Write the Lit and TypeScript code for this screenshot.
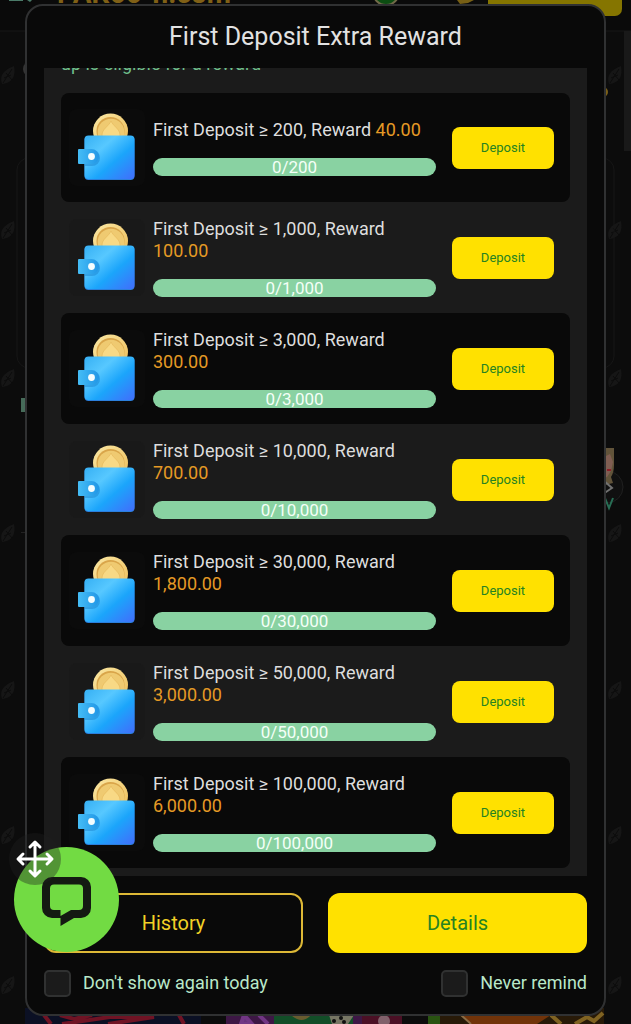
import { LitElement, html, css, svg } from "lit";
import { customElement, property } from "lit/decorators.js";

interface Tier {
  target: string;
  reward: string;
}

const TIERS: Tier[] = [
  { target: "200", reward: "40.00" },
  { target: "1,000", reward: "100.00" },
  { target: "3,000", reward: "300.00" },
  { target: "10,000", reward: "700.00" },
  { target: "30,000", reward: "1,800.00" },
  { target: "50,000", reward: "3,000.00" },
  { target: "100,000", reward: "6,000.00" },
];

@customElement("wallet-icon")
class WalletIcon extends LitElement {
  static styles = css`
    :host { display: block; width: 76px; height: 77px; border-radius: 8px; background: rgba(20, 20, 20, 0.2); }
    svg { display: block; }
  `;
  render() {
    return html`<svg width="76" height="77" viewBox="0 0 76 77" aria-hidden="true">
      <defs>
        <linearGradient id="body" x1="0" y1="0" x2="1" y2="1">
          <stop offset="0" stop-color="#36b0f4" />
          <stop offset="0.32" stop-color="#57c8ff" />
          <stop offset="0.6" stop-color="#1ba5fb" />
          <stop offset="1" stop-color="#426dfb" />
        </linearGradient>
        <linearGradient id="clasp" x1="0" y1="0" x2="1" y2="0">
          <stop offset="0" stop-color="#45bdf6" />
          <stop offset="1" stop-color="#2196e6" />
        </linearGradient>
        <linearGradient id="coin" x1="0" y1="0" x2="1" y2="1">
          <stop offset="0" stop-color="#fbe9a6" />
          <stop offset="1" stop-color="#ecbb55" />
        </linearGradient>
      </defs>
      <circle cx="41.500" cy="22" r="17.500" fill="url(#coin)" />
      <circle cx="41.500" cy="22" r="14" fill="#d9a54a" />
      <circle cx="42" cy="23" r="13.300" fill="#efca71" />
      <path d="M42 12c2 5 9 8 9 14 0 5-5 6-8 3l1 6h-5l2-6c-3 3-8 2-8-3 0-6 7-9 9-14z" fill="#f8d985" stroke="#e6ba5e" stroke-width=".7" />
      <rect x="15.500" y="27" width="50" height="44" rx="4" fill="#2b7fdc" />
      <rect x="15.500" y="26.500" width="50" height="43.500" rx="4" fill="url(#body)" />
      <path d="M15.500 41h7.500a7.500 7.500 0 0 1 0 16H15.500z" fill="#1275c4" opacity=".4" />
      <path d="M10 40H22.500a7.500 7.500 0 0 1 0 15H10a1 1 0 0 1-1-1V41a1 1 0 0 1 1-1z" fill="url(#clasp)" />
      <circle cx="22.500" cy="47.500" r="3.400" fill="#f4fdff" />
    </svg>`;
  }
}

@customElement("tier-row")
class TierRow extends LitElement {
  @property() target = "";
  @property() reward = "";

  static styles = css`
    :host { display: flex; align-items: center; gap: 8px; padding: 16px 16px 16px 8px; border-radius: 8px; }
    :host(:nth-of-type(odd)) { background: #090909; }
    .info { flex: 1; min-width: 0; display: grid; gap: 17px; margin-right: 8px; }
    .label { margin: 0; font-size: 18px; line-height: 22px; color: #dedede; }
    .reward { color: #e59a25; }
    .bar { height: 18px; border-radius: 9px; background: #89d2a2; color: #f4fff7; font-size: 17px; line-height: 18px; text-align: center; }
    .deposit { width: 102px; height: 42px; padding: 0; border: 0; border-radius: 8px; background: #ffe100; color: #268222; font: 13px/20px Roboto, sans-serif; }
  `;
  render() {
    return html`<wallet-icon></wallet-icon>
      <div class="info">
        <p class="label">First Deposit ≥ ${this.target}, Reward <span class="reward">${this.reward}</span></p>
        <div class="bar" role="progressbar" aria-valuenow="0" aria-label="Deposit progress">0/${this.target}</div>
      </div>
      <button class="deposit" type="button">Deposit</button>`;
  }
}

@customElement("site-backdrop")
class SiteBackdrop extends LitElement {
  static styles = css`
    :host { display: block; overflow: hidden; background: #0c0c0c; }
    svg { position: absolute; left: 0; top: 0; width: 100%; height: 100%; }
    .brand { position: absolute; left: 57px; top: -24px; font: 700 28px/36px Roboto, sans-serif; color: #806016; }
    .cta { position: absolute; right: 9px; top: -30px; width: 134px; height: 46px; border-radius: 7px; background: #857500; }
  `;
  render() {
    const leaves = [75, 230, 378, 533, 690, 835, 985];
    const leaf = (x: number, y: number) => svg`<g transform="translate(${x} ${y})" fill="#161616"><path d="M-6 9C-9 0-4-5 6-9 8 2 4 8-6 9z"/><path d="M-5 8L4-6M-4 3l7-3M-2-2l6 7" stroke="#0c0c0c" stroke-width="1"/></g>`;
    return html`<svg viewBox="0 0 631 1024" preserveAspectRatio="none" aria-hidden="true">
        <rect width="631" height="31" fill="#0a0a0a" />
        <path d="M0 31h631" stroke="#171717" />
        ${leaves.map((y) => [leaf(8, y), leaf(615, y)])}
        <rect x="17" y="158" width="597" height="210" rx="12" fill="none" stroke="#161616" />
        <rect x="624" y="31" width="7" height="120" fill="#191919" />
        <path d="M9 0h14v1H9zM27 0h5l-2 2z" fill="#4b7b69" />
        <circle cx="386" cy="-8" r="13" fill="#0c4d12" stroke="#716a48" stroke-width="2" />
        <path d="M457 0l3 4 8-1 6-3z" fill="#786015" />
        <circle cx="31" cy="69" r="8" fill="#343434" />
        <circle cx="603" cy="92" r="5" fill="#7c6018" />
        <rect x="21" y="398" width="6" height="14" fill="#466b59" />
        <rect x="21" y="532" width="6" height="1" fill="#222222" />
        <circle cx="607" cy="487" r="16" fill="#101010" stroke="#202020" />
        <path d="M603 448h11v17c0 5-1 9-3 12l2 6-8 2z" fill="#62543a" />
        <path d="M604 457l6-3 3 8-2 9-4 6-3 1z" fill="#805e52" />
        <path d="M607 470h4" stroke="#8b2029" stroke-width="2" />
        <path d="M603 480l9 8-9 6" fill="none" stroke="#717171" stroke-width="2" />
        <path d="M605 498l4 10 4-10" fill="none" stroke="#286e55" stroke-width="2" />
        <rect x="25" y="1008" width="176" height="16" fill="#0b1024" />
        <path d="M44 1015l7 9M60 1015l14 4 18-4M62 1024l48-7h44l-46 7M179 1015l5 9" stroke="#701324" stroke-width="4" fill="none" />
        <rect x="226" y="1008" width="176" height="16" fill="#3d1745" />
        <path d="M241 1024l3-9 8 9zm18-9l9 9" fill="#67317a" stroke="#713684" stroke-width="4" />
        <path d="M274 1024v-9h79v9z" fill="#124e28" />
        <path d="M291 1015h20q-9 10-20 0" fill="#695b2f" />
        <path d="M329 1015h25l-6 9h-16z" fill="#777664" />
        <circle cx="334" cy="1021" r="2" fill="#101010" /><circle cx="341" cy="1018" r="2" fill="#101010" /><circle cx="344" cy="1022" r="2" fill="#101010" />
        <path d="M362 1024v-9h40v9z" fill="#4b1025" /><circle cx="384" cy="1021" r="6" fill="#81616b" />
        <rect x="428" y="1008" width="176" height="16" fill="#281a08" />
        <path d="M428 1015h12v9h-12z" fill="#295311" />
        <path d="M461 1015h90l-14 9h-66z" fill="#713309" />
        <path d="M461 1015l10 9" stroke="#8b6c45" stroke-width="2" />
        <path d="M551 1015l10 9M575 1024l12-7 7 4 9-8" stroke="#806322" stroke-width="4" fill="none" />
      </svg>
      <div class="brand">PAK66-n.com</div>
      <div class="cta"></div>`;
  }
}

@customElement("app-root")
class AppRoot extends LitElement {
  static styles = css`
    * { box-sizing: border-box; }
    :host { display: flex; position: relative; box-sizing: border-box; height: 100vh; padding: 4px 25px 8px; font-family: Roboto, sans-serif; color: #e2e2e2; overflow: hidden; background: #0c0c0c; }
    .backdrop { position: absolute; inset: 0; }
    .dialog { position: relative; flex: 1; min-width: 0; display: flex; flex-direction: column; padding: 0 17px 17px; border: 2px solid #303132; border-radius: 18px; background: #090909; }
    .title { margin: 0; padding: 16px 0; font-size: 25px; line-height: 30px; font-weight: 400; text-align: center; }
    .panel { flex: 1; min-height: 0; overflow: hidden; display: flex; flex-direction: column; justify-content: flex-end; padding: 0 17px 8px; background: #1b1b1b; }
    .notice { margin: 0 0 18px; font-size: 18px; line-height: 22px; color: #6fbf8b; }
    .actions { display: grid; grid-template-columns: 1fr 1fr; gap: 25px; margin-top: 17px; }
    .action { height: 60px; border-radius: 12px; font: 20px/24px Roboto, sans-serif; }
    .history { border: 2px solid #ddb836; background: transparent; color: #f2d126; }
    .details { border: 0; background: #ffe100; color: #268222; }
    .options { display: flex; justify-content: space-between; margin-top: 16px; }
    .option { display: flex; align-items: center; gap: 12px; font-size: 18px; line-height: 28px; color: #b9e8c9; }
    .check { appearance: none; width: 27px; height: 27px; margin: 0; border: 2px solid #303131; border-radius: 5px; background: #1b1b1b; }
    .check:checked { background: #ffe100; }
    .chat { position: absolute; left: 14px; bottom: 72px; width: 105px; height: 105px; padding: 0; border: 0; border-radius: 50%; background: #72db43; }
    .chat-icon { display: block; }
    .move { position: absolute; left: 8px; bottom: 138px; }
  `;

  render() {
    return html`<site-backdrop class="backdrop"></site-backdrop>
      <main class="dialog">
        <h1 class="title">First Deposit Extra Reward</h1>
        <section class="panel">
          <p class="notice">up is eligible for a reward</p>
          ${TIERS.map((t) => html`<tier-row .target=${t.target} .reward=${t.reward}></tier-row>`)}
        </section>
        <div class="actions">
          <button class="action history" type="button">History</button>
          <button class="action details" type="button">Details</button>
        </div>
        <div class="options">
          <label class="option"><input class="check" type="checkbox" />Don't show again today</label>
          <label class="option"><input class="check" type="checkbox" />Never remind</label>
        </div>
      </main>
      <button class="chat" type="button" aria-label="Chat">
        <svg class="chat-icon" width="105" height="105" viewBox="0 0 105 105" aria-hidden="true">
          <path fill-rule="evenodd" d="M38 30H67A10 10 0 0 1 77 40V61A10 10 0 0 1 67 71H60L46.500 79V71H38A10 10 0 0 1 28 61V40A10 10 0 0 1 38 30ZM40 37.500A4 4 0 0 0 36 41.500V59A4 4 0 0 0 40 63H46.500V69L57 63H65A4 4 0 0 0 69 59V41.500A4 4 0 0 0 65 37.500Z" fill="#141a12" />
        </svg>
      </button>
      <svg class="move" width="54" height="54" viewBox="0 0 54 54" aria-hidden="true">
        <circle cx="27" cy="27" r="26" fill="#202020" fill-opacity="0.38" />
        <path d="M27 11v32M11 27h32M22 15l5-5 5 5M22 39l5 5 5-5M15 22l-5 5 5 5M39 22l5 5-5 5" fill="none" stroke="#fff" stroke-width="3" stroke-linecap="round" stroke-linejoin="round" />
      </svg>`;
  }
}
